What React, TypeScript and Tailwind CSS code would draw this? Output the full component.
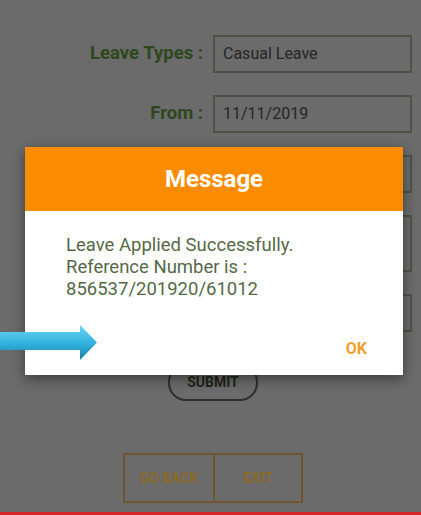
import React from "react";

const font = { fontFamily: "Roboto, 'Noto Sans', sans-serif" };

function Field({ label, value, tall }: { label?: string; value?: string; tall?: boolean }) {
  return (
    <div className="flex items-center">
      <div className="w-[203px] text-right text-[18.5px] font-bold text-[#2f471d]">{label}</div>
      <div
        className={`ml-[10px] w-[199px] border-2 border-[#4b5444] px-[8px] flex items-center text-[16px] text-[#262626] ${
          tall ? "h-[57px]" : "h-[38px]"
        }`}
      >
        {value}
      </div>
    </div>
  );
}

export default function App() {
  return (
    <div className="relative w-[421px] h-[515px] overflow-hidden bg-[#6b6b6b]" style={font}>
      {/* form behind the dialog */}
      <div className="flex flex-col pt-[35px] gap-[22px]">
        <Field label="Leave Types :" value="Casual Leave" />
        <Field label="From :" value="11/11/2019" />
        <Field />
        <Field tall />
        <Field />
      </div>
      <div className="flex justify-center mt-[32px] pl-[5px]">
        <div className="w-[90px] h-[37px] rounded-[18px] border-2 border-[#2e2e2e] flex items-center justify-center text-[14px] font-bold text-[#1f2619]">
          SUBMIT
        </div>
      </div>
      <div className="flex justify-center mt-[52px] pl-[5px]">
        <div className="flex border-2 border-[#6e5530]">
          <div className="w-[88px] h-[46px] flex items-center justify-center text-[14px] font-bold text-[#8a6a2a]">
            GO BACK
          </div>
          <div className="w-[88px] h-[46px] border-l-2 border-[#6e5530] flex items-center justify-center text-[14px] font-bold text-[#8a6a2a]">
            EXIT
          </div>
        </div>
      </div>
      <div className="absolute left-0 right-0 bottom-0 h-[3px] bg-[#d8252a]" />

      {/* dialog */}
      <div className="absolute left-[25px] top-[147px] w-[378px] h-[228px] bg-white flex flex-col shadow-[0_4px_12px_rgba(0,0,0,0.45)]">
        <div className="h-[64px] bg-[#fb8c00] flex items-center justify-center text-[24px] font-bold text-white">
          Message
        </div>
        <div className="pl-[41px] pt-[23px] text-[18.5px] leading-[22px] text-[#566848]">
          <div>Leave Applied Successfully.</div>
          <div>Reference Number is :</div>
          <div>856537/201920/61012</div>
        </div>
        <div className="flex justify-end pr-[36px] mt-[37px] text-[16px] font-bold text-[#f0a030]">OK</div>
      </div>

      {/* arrow annotation */}
      <svg className="absolute left-0 top-[322px]" width="100" height="42" viewBox="0 0 100 42">
        <defs>
          <linearGradient id="ag" x1="0" y1="0" x2="0" y2="1">
            <stop offset="0" stopColor="#6fd6f2" />
            <stop offset="0.5" stopColor="#33b4df" />
            <stop offset="1" stopColor="#1a7fa8" />
          </linearGradient>
        </defs>
        <path d="M0 10 L80 10 L80 3 L97 20.5 L80 38 L80 28 L0 28 Z" fill="url(#ag)" />
      </svg>
    </div>
  );
}
